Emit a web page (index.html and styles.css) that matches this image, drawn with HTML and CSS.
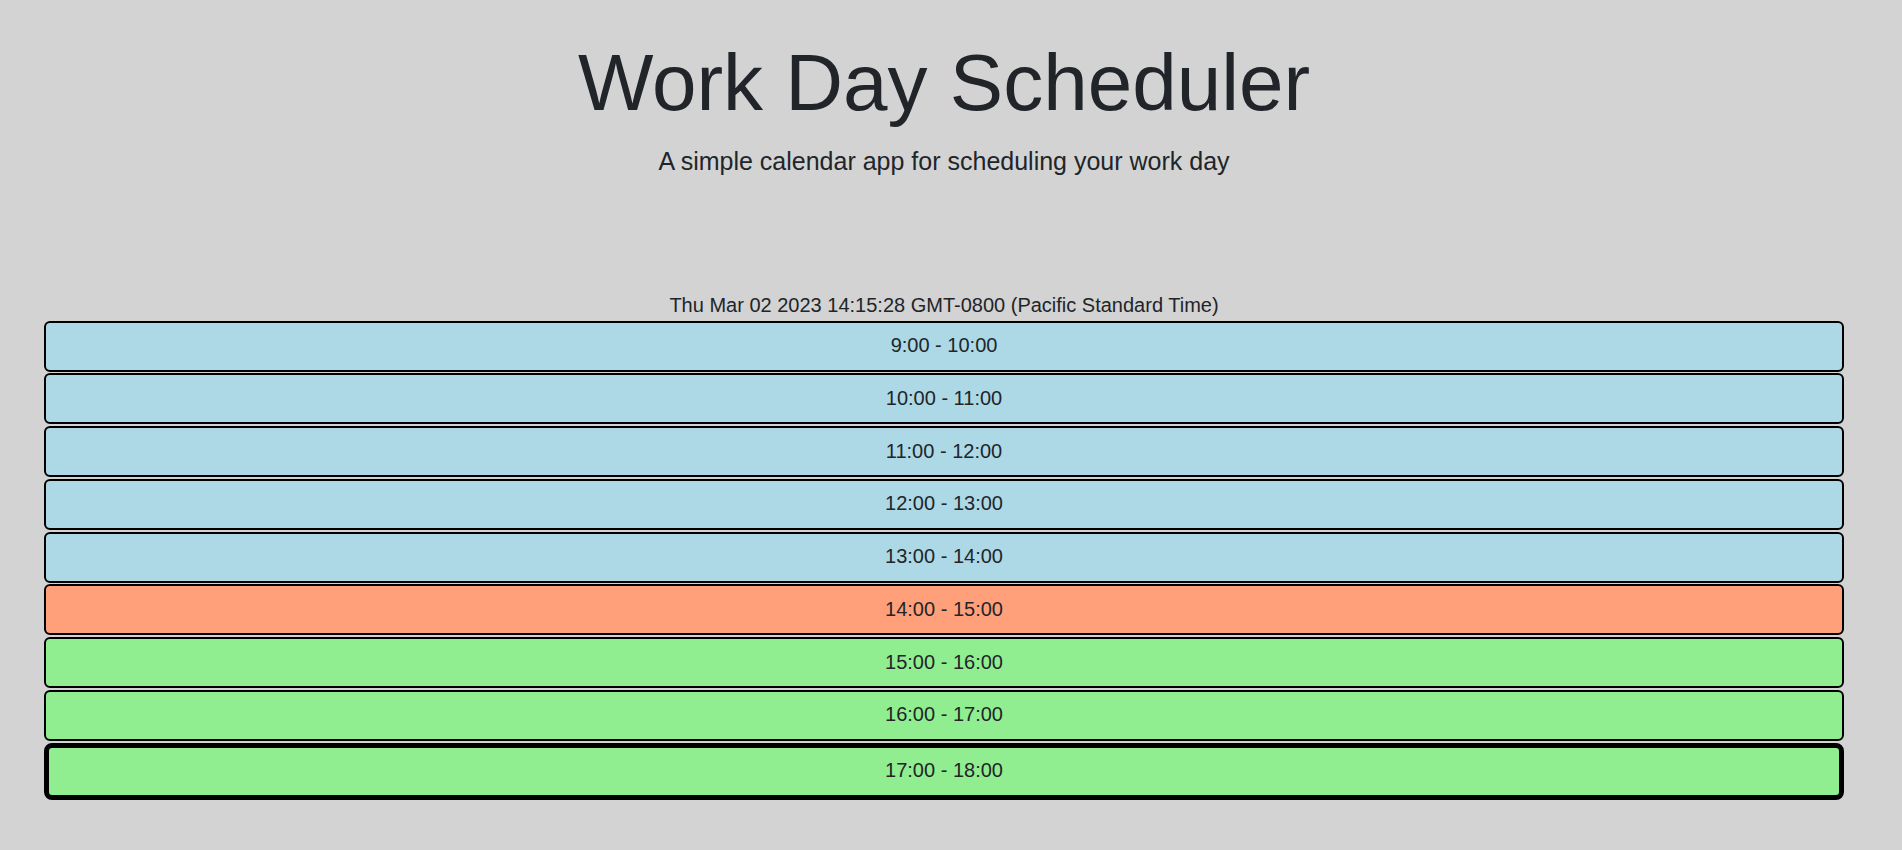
FILE: index.html
```html
<!DOCTYPE html>
<html lang="en">
<head>
<meta charset="utf-8">
<title>Work Day Scheduler</title>
<link rel="stylesheet" href="styles.css">
</head>
<body>
<div class="page">
  <header class="jumbotron">
    <h1 class="title">Work Day Scheduler</h1>
    <p class="lead">A simple calendar app for scheduling your work day</p>
  </header>
  <main class="schedule">
    <p class="current-day">Thu Mar 02 2023 14:15:28 GMT-0800 (Pacific Standard Time)</p>
    <div class="hours">
      <div class="hour past">9:00 - 10:00</div>
      <div class="hour past">10:00 - 11:00</div>
      <div class="hour past">11:00 - 12:00</div>
      <div class="hour past">12:00 - 13:00</div>
      <div class="hour past">13:00 - 14:00</div>
      <div class="hour present">14:00 - 15:00</div>
      <div class="hour future">15:00 - 16:00</div>
      <div class="hour future">16:00 - 17:00</div>
      <div class="hour future focused">17:00 - 18:00</div>
    </div>
  </main>
</div>
</body>
</html>
```

FILE: styles.css
```css
html, body {
  margin: 0;
  padding: 0;
  background: #d3d3d3;
}

body {
  font-family: "Liberation Sans", Arial, sans-serif;
  color: #212529;
  height: 850px;
  overflow: hidden;
}

.page {
  width: 1888px;
}

.jumbotron {
  text-align: center;
  padding-top: 35px;
}

.title {
  margin: 0;
  font-size: 80px;
  font-weight: 400;
  line-height: 96px;
}

.lead {
  margin: 11.5px 0 0;
  font-size: 25px;
  line-height: 37.5px;
}

.schedule {
  padding: 0 44px;
  margin-top: 112.5px;
}

.current-day {
  margin: 0 0 4px;
  text-align: center;
  font-size: 20px;
  line-height: 24px;
}

.hours {
  display: flex;
  flex-direction: column;
  gap: 1.75px;
}

.hour {
  height: 46px;
  padding-bottom: 1px;
  border: 2px solid #000;
  border-radius: 6px;
  display: flex;
  align-items: center;
  justify-content: center;
  font-size: 20px;
}

.past {
  background: #add8e6;
}

.present {
  background: #ffa07a;
}

.future {
  background: #90ee90;
}

.focused {
  border-width: 5px;
  border-radius: 8px;
}
```
